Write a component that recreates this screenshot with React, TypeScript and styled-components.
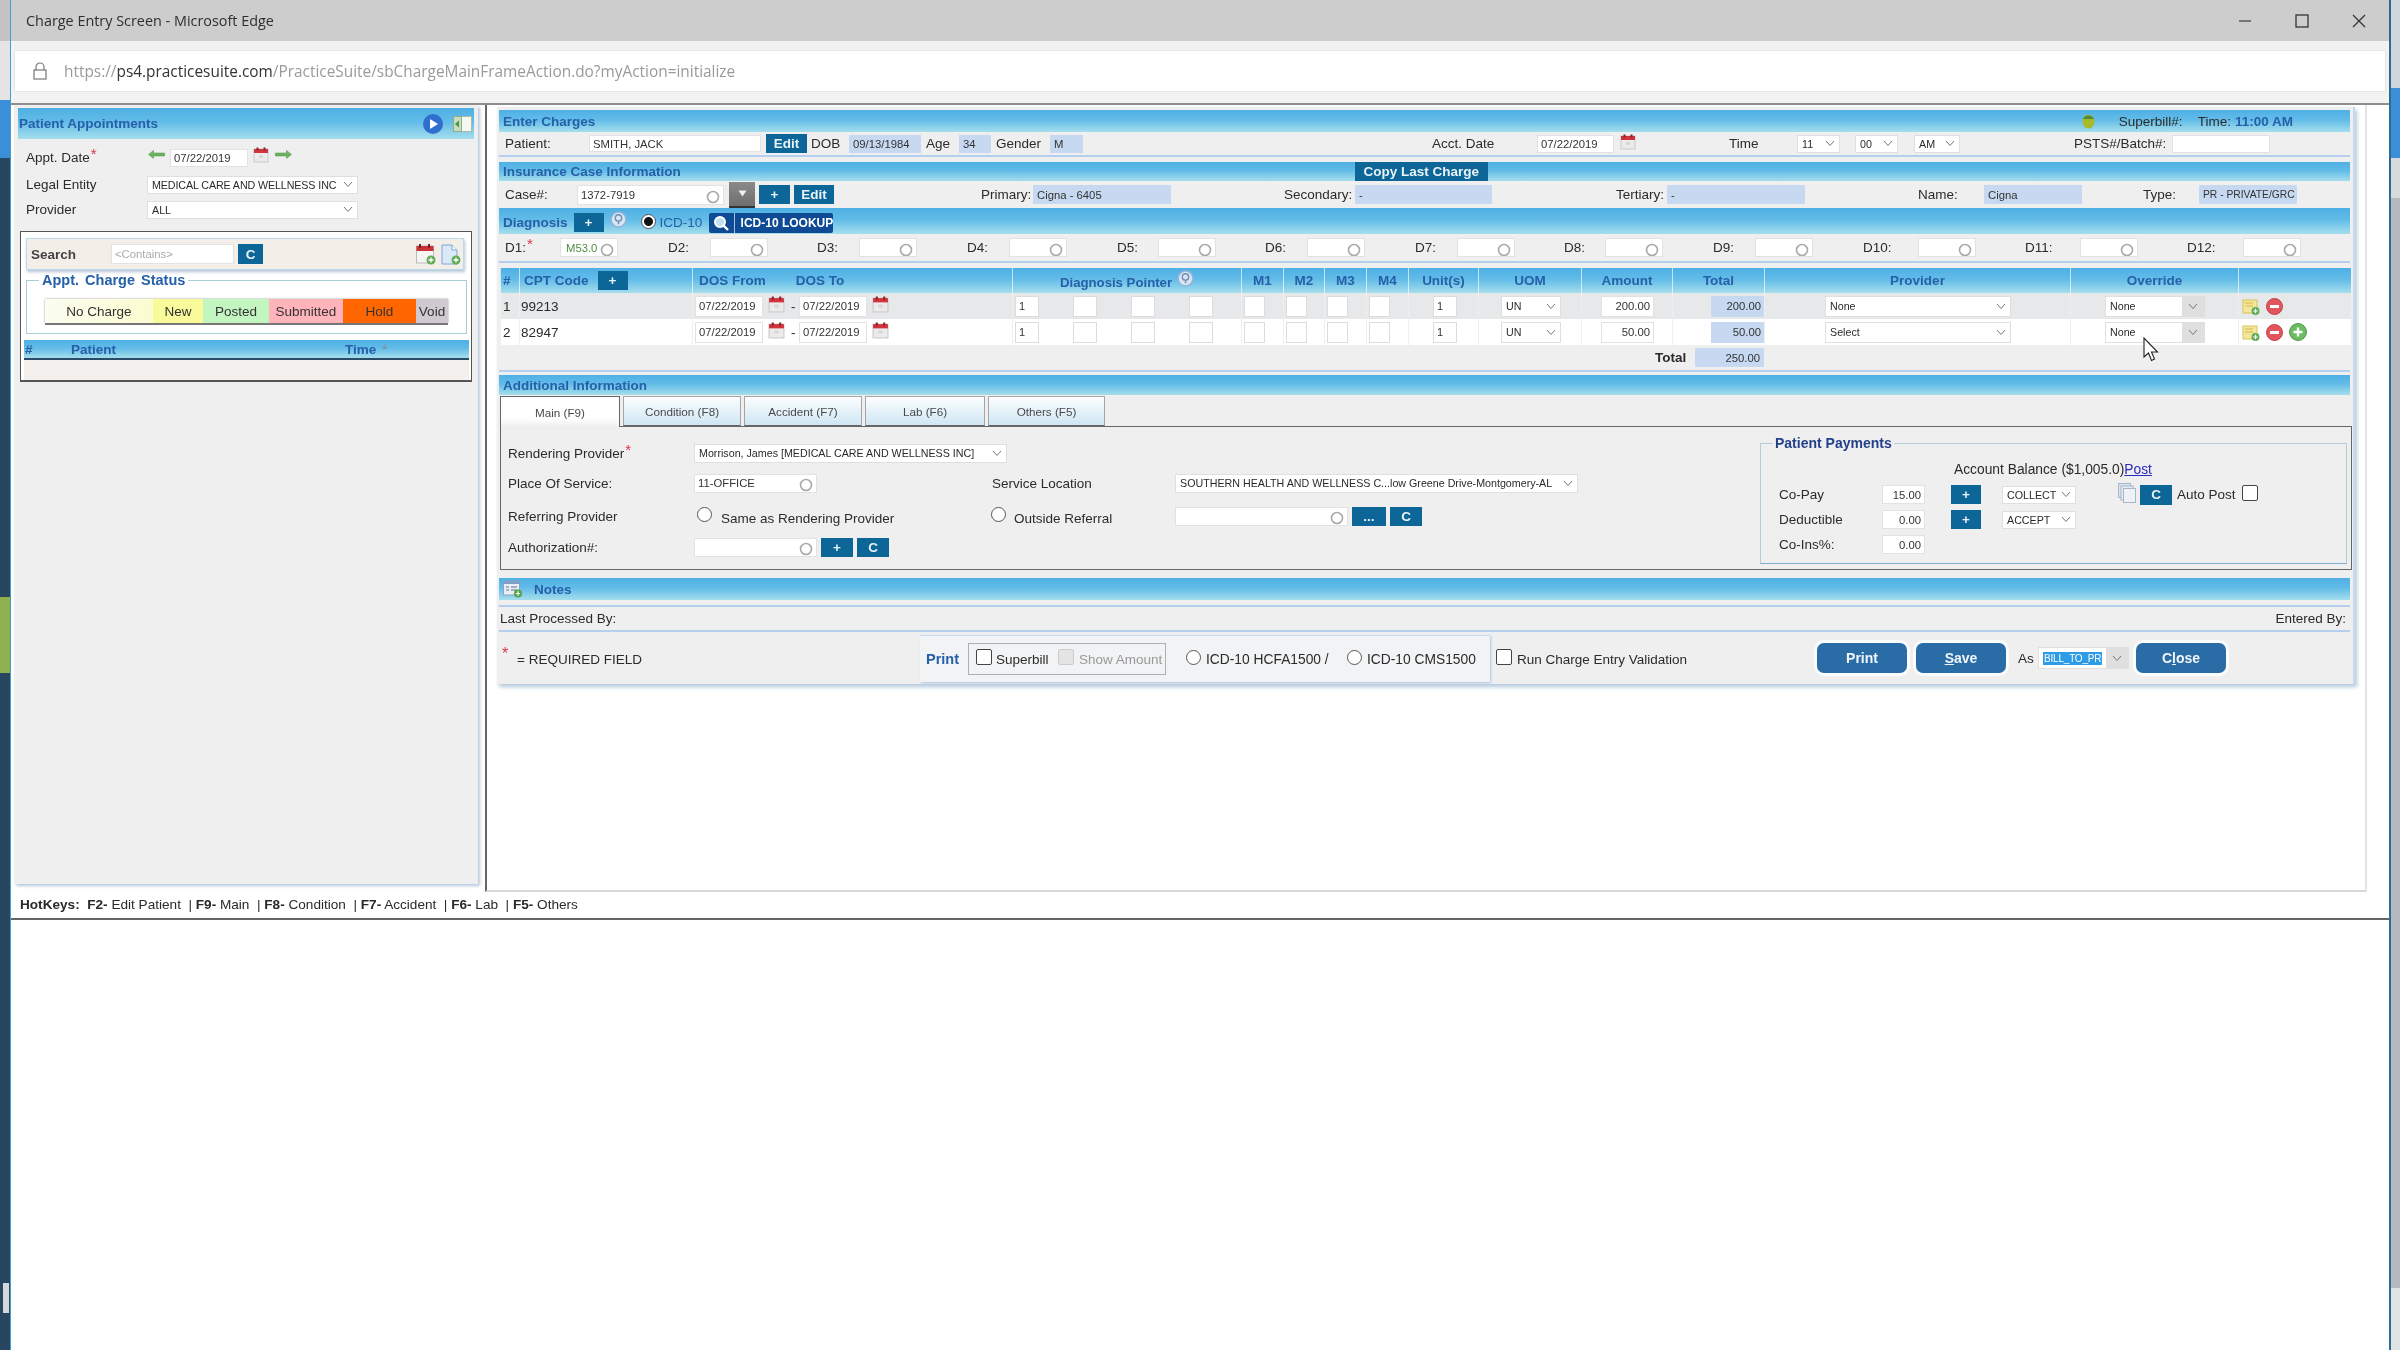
import React from "react";
import styled, { createGlobalStyle } from "styled-components";

const Global = createGlobalStyle`
  html, body { margin: 0; padding: 0; background: #fff; }
  body { font-family: "Liberation Sans", Arial, sans-serif; font-size: 13.5px; color: #2a2a2a; }
  * { box-sizing: border-box; }
`;

const BLUE = "#2560a8";
const headGrad = "linear-gradient(180deg, #4fb0e4 0%, #62bce8 45%, #a5deec 100%)";

const Page = styled.div`
  width: 2400px; height: 1350px; display: flex; overflow: hidden; background: #fff; filter: blur(0.4px);
`;
const LeftStrip = styled.div`
  width: 11px; display: flex; flex-direction: column; background: #274761; border-right: 1px solid #3fa3c9;
`;
const StripPart = styled.div<{ $h: number; $c: string }>`
  height: ${p => p.$h}px; background: ${p => p.$c}; flex: none;
`;
const StripHandle = styled.div`
  width: 6px; height: 30px; margin-left: 3px; background: #d5d8da; flex: none;
`;
const RightStrip = styled.div`
  width: 11px; display: flex; flex-direction: column; background: #b6babe; border-left: 2px solid #2f6a8f;
`;
const Win = styled.div`
  flex: 1; display: flex; flex-direction: column; min-width: 0;
`;
const TitleBar = styled.div`
  height: 41px; background: #cdcdcd; display: flex; align-items: center; padding-left: 15px;
  font-family: "Open Sans", sans-serif; font-size: 14.4px; color: #2f2f2f;
`;
const WinBtns = styled.div`
  margin-left: auto; display: flex; align-items: center; gap: 43px; padding-right: 23px;
`;
const AddressArea = styled.div`
  height: 62px; background: #f2f2f2; padding: 9px 3px 10px 3px;
`;
const AddressBox = styled.div`
  height: 42px; background: #fff; border: 1px solid #e6e6e6; display: flex; align-items: center; padding-left: 18px;
  font-family: "Open Sans", sans-serif; font-size: 15.4px; color: #9a9a9a; white-space: nowrap;
`;
const Host = styled.span` color: #333; `;
const Url = styled.span` margin-left: 17px; `;
const Body = styled.div`
  height: 787px; display: flex; flex: none; border-top: 2px solid #8d8d8d;
`;
const LeftPanel = styled.div`
  width: 464px; height: 779px; margin-left: 3px; background: #efeff0; padding: 3px 4px 0; flex: none;
  box-shadow: 2px 2px 3px #b4c8dc;
`;
const RightPanel = styled.div`
  margin-left: 7px; width: 1882px; flex: none; height: 787px; background: #fff;
  border-left: 2px solid #666; border-right: 2px solid #e4e4e4; border-bottom: 2px solid #d8d8d8;
  padding: 2px 0 0 10px;
`;
const Bar = styled.div<{ $h: number; $mt?: number; $pt?: number; $pl?: number }>`
  height: ${p => p.$h}px; margin-top: ${p => p.$mt ?? 0}px; padding-top: ${p => p.$pt ?? 0}px; background: ${headGrad}; display: flex; align-items: center;
  padding-left: ${p => p.$pl ?? 4}px; color: ${BLUE}; font-weight: 700; font-size: 13.5px; white-space: nowrap; flex: none;
`;
const LRow = styled.div<{ $h: number; $pt?: number }>`
  height: ${p => p.$h}px; padding-top: ${p => p.$pt ?? 0}px; display: flex; align-items: center; padding-left: 8px;
`;
const Label = styled.span<{ $w?: number; $ml?: number; $mt?: number; $b?: boolean; $c?: string; $fs?: number }>`
  display: inline-block; flex: none; white-space: nowrap;
  ${p => (p.$w ? `width:${p.$w}px;` : "")}
  margin-left: ${p => p.$ml ?? 0}px;
  margin-top: ${p => p.$mt ?? 0}px;
  font-weight: ${p => (p.$b ? 700 : 400)};
  color: ${p => p.$c ?? "#2b2b2b"};
  font-size: ${p => p.$fs ?? 13.5}px;
`;
const Star = styled.sup`
  color: #e0324b; font-size: 15px; line-height: 0; vertical-align: 3px; margin-left: 1px;
`;
const Inp = styled.div<{ $w: number; $ml?: number; $h?: number; $right?: boolean; $fs?: number; $c?: string }>`
  width: ${p => p.$w}px; height: ${p => p.$h ?? 18}px; margin-left: ${p => p.$ml ?? 0}px; flex: none;
  background: #fff; border: 1px solid #e2e2e2; display: flex; align-items: center;
  justify-content: ${p => (p.$right ? "flex-end" : "flex-start")};
  padding: 0 3px; font-size: ${p => p.$fs ?? 11.3}px; color: ${p => p.$c ?? "#333"}; white-space: nowrap; overflow: hidden;
`;
const InpText = styled.span` flex: 1; overflow: hidden; `;
const Ro = styled(Inp)`
  background: #c6d9f1; border-color: #c6d9f1;
`;
const Sel = styled.div<{ $w: number; $ml?: number; $h?: number }>`
  width: ${p => p.$w}px; height: ${p => p.$h ?? 18}px; margin-left: ${p => p.$ml ?? 0}px; flex: none;
  background: #fff; border: 1px solid #dfdfdf; display: flex; align-items: center;
  padding-left: 4px; font-size: 10.7px; color: #2a2a2a; white-space: nowrap; overflow: hidden;
`;
const SelText = styled.span` flex: 1; overflow: hidden; `;
const Tight = styled.span` letter-spacing: -0.1px; `;
const SelArrow = styled.span<{ $shade?: boolean; $w?: number }>`
  width: ${p => p.$w ?? 18}px; height: 100%; display: flex; align-items: center; justify-content: center; flex: none;
  background: ${p => (p.$shade ? "#dfdfdf" : "transparent")};
`;
const Btn = styled.div<{ $w: number; $ml?: number; $h?: number; $gray?: boolean }>`
  width: ${p => p.$w}px; height: ${p => p.$h ?? 19}px; margin-left: ${p => p.$ml ?? 0}px; flex: none;
  background: ${p => (p.$gray ? "linear-gradient(180deg,#8a8a8a,#6e6e6e)" : "#0c6697")};
  ${p => (p.$gray ? "border-bottom: 2px solid #333;" : "")}
  color: #e9f3f8; font-weight: 700; font-size: 13.5px;
  display: flex; align-items: center; justify-content: center;
`;
const Icon = styled.span<{ $ml?: number; $mt?: number }>`
  display: inline-flex; flex: none; margin-left: ${p => p.$ml ?? 0}px; margin-top: ${p => p.$mt ?? 0}px;
`;

const Box = styled.div`
  margin: 9px 0 0 2px; width: 452px; height: 151px; background: #fff; border: 1px solid #555; border-bottom-width: 2px;
  padding: 6px 0 0 5px;
`;
const SearchBar = styled.div`
  width: 438px; height: 32px; background: #f3eee8; border: 1px solid #b9d9ec; box-shadow: 1px 2px 3px #b5c5d5;
  display: flex; align-items: center; padding-left: 4px; flex: none;
`;
const StatusSet = styled.fieldset`
  width: 441px; height: 62px; margin: 2px 0 0 0; padding: 0 0 0 18px; border: 1px solid #a9cdd6;
`;
const StatusLegend = styled.legend`
  margin-left: -6px; padding: 0 3px; font-weight: 700; font-size: 14.5px; color: ${BLUE}; word-spacing: 2px; line-height: 16px;
`;
const StatusBar = styled.div`
  width: 403px; height: 24px; margin-top: 11px; display: flex; box-shadow: 0 2px 0 #777, 0 0 2px #999;
`;
const StatusCell = styled.div<{ $w: number; $bg: string; $c?: string }>`
  width: ${p => p.$w}px; background: ${p => p.$bg}; display: flex; align-items: center; justify-content: center;
  font-size: 13.5px; color: ${p => p.$c ?? "#333"}; flex: none;
`;
const ApptHead = styled.div`
  width: 445px; height: 20px; margin: 6px 0 0 -2px; background: ${headGrad}; border-bottom: 2px solid #2a4a6a;
  display: flex; align-items: center; color: ${BLUE}; font-weight: 700; font-size: 13.5px; padding-left: 1px;
`;
const ApptRow = styled.div`
  width: 445px; height: 20px; margin-left: -2px; background: #f3f0ee;
`;

const Card = styled.div`
  width: 1858px; height: 577px; background: #efeff0; padding: 3px 3px 0 2px;
  box-shadow: 2px 3px 4px #b4c8dc; border-right: 2px solid #c6d9ee;
`;
const Row = styled.div<{ $h: number; $pl?: number }>`
  height: ${p => p.$h}px; display: flex; align-items: center; padding-left: ${p => p.$pl ?? 6}px; flex: none;
`;
const Rule = styled.div<{ $mt?: number }>`
  height: 2px; background: #b5cfee; margin-top: ${p => p.$mt ?? 0}px; flex: none;
`;
const RightGroup = styled.div<{ $pr: number }>`
  margin-left: auto; padding-right: ${p => p.$pr}px; display: flex; align-items: center; font-weight: 400;
`;
const Grid = styled.div`
  display: grid; margin: 5px 0 0 1px;
  grid-template-columns: 19px 173px 320px 229px 42px 41px 42px 42px 70px 103px 91px 92px 306px 168px 113px;
`;
const HCell = styled.div<{ $center?: boolean; $pl?: number; $pt?: number }>`
  height: 25px; background: ${headGrad}; color: ${BLUE}; font-weight: 700; font-size: 13.5px;
  display: flex; align-items: center; white-space: nowrap;
  justify-content: ${p => (p.$center ? "center" : "flex-start")};
  padding-left: ${p => p.$pl ?? 0}px;
  border-left: 1px solid rgba(255,255,255,.65);
`;
const DCell = styled.div<{ $alt?: boolean; $pl?: number; $gap?: number }>`
  height: 26px; background: ${p => (p.$alt ? "#fff" : "#e6e8ea")}; display: flex; align-items: center;
  padding-left: ${p => p.$pl ?? 0}px; white-space: nowrap; font-size: 13.5px; gap: ${p => p.$gap ?? 0}px;
  border-left: 1px solid ${p => (p.$alt ? "#eee" : "#eceef0")};
`;
const SmallBox = styled.div<{ $w: number }>`
  width: ${p => p.$w}px; height: 21px; background: #fff; border: 1px solid #dcdcdc; flex: none;
  display: flex; align-items: center; padding-left: 3px; font-size: 11px; color: #333;
`;
const Tabs = styled.div`
  display: flex; height: 30px; padding-left: 1px; gap: 3px; margin-top: 1px; flex: none;
`;
const Tab = styled.div<{ $w: number; $on?: boolean }>`
  width: ${p => p.$w}px; height: ${p => (p.$on ? 31 : 30)}px; z-index: 1; flex: none; padding-top: 1px;
  background: ${p => (p.$on ? "#fff linear-gradient(180deg,#fff 70%,#efeff0)" : "linear-gradient(180deg,#fbfdfe,#cfe7f3)")};
  border: 1px solid ${p => (p.$on ? "#666" : "#a5a5a5")}; border-bottom: ${p => (p.$on ? "none" : "1px solid #666")};
  display: flex; align-items: center; justify-content: center; font-size: 11.7px; color: #4a4a4a;
`;
const TabPanel = styled.div`
  margin-left: 1px; width: 1852px; height: 144px; border: 1px solid #666; display: flex; flex: none;
`;
const FormCol = styled.div`
  padding: 13px 0 0 7px; display: flex; flex-direction: column; width: 1240px; flex: none;
`;
const FormRow = styled.div<{ $h: number }>`
  height: ${p => p.$h}px; display: flex; align-items: center; flex: none;
`;
const Pay = styled.fieldset`
  margin: 8px 0 0 19px; padding: 0; width: 587px; height: 129px; border: 1px solid #b0ced8; border-bottom-color: #7fb0d0; flex: none;
`;
const PayLegend = styled.legend`
  margin-left: 12px; padding: 0 2px; font-weight: 700; font-size: 14px; color: #24408a; line-height: 16px;
`;
const PayRow = styled.div<{ $pl?: number; $mt?: number; $fs?: number }>`
  height: 25px; display: flex; align-items: center; padding-left: ${p => p.$pl ?? 18}px; margin-top: ${p => p.$mt ?? 0}px;
  font-size: ${p => p.$fs ?? 13.5}px;
`;
const Link = styled.a`
  color: #2a2ac0; text-decoration: underline; font-size: 13.8px;
`;
const Foot = styled.div`
  height: 52px; display: flex; align-items: center; padding-left: 3px; flex: none;
`;
const PrintBox = styled.div`
  width: 570px; height: 47px; flex: none; background: #f2f3f4; display: flex; align-items: center; padding-left: 6px;
  box-shadow: 1px 1px 2px #a9c4e4; border-top: 1px solid #c8daee;
`;
const PrintInner = styled.div`
  width: 198px; height: 32px; border: 1px solid #b0b0b0; display: flex; align-items: center; padding-left: 7px; flex: none;
`;
const Check = styled.div<{ $ml?: number; $off?: boolean }>`
  width: 16px; height: 16px; flex: none; margin-left: ${p => p.$ml ?? 0}px; margin-top: -3px;
  border: 1px solid ${p => (p.$off ? "#ccc" : "#444")}; background: ${p => (p.$off ? "#e4e4e4" : "#fff")}; border-radius: 2px;
`;
const Radio = styled.div<{ $ml?: number; $on?: boolean }>`
  width: 15px; height: 15px; flex: none; margin-left: ${p => p.$ml ?? 0}px; margin-top: -3px; border-radius: 50%;
  border: 1px solid #555; background: ${p => (p.$on ? "radial-gradient(circle,#111 0 4px,#fff 5px)" : "#fff")};
`;
const ActBtn = styled.div<{ $ml?: number }>`
  width: 90px; height: 30px; margin-left: ${p => p.$ml ?? 0}px; flex: none; background: #2a6ca6; border-radius: 7px;
  color: #f1f6fa; font-weight: 700; font-size: 14px; display: flex; align-items: center; justify-content: center;
  box-shadow: 0 0 0 3px #fbfcfd;
`;
const Under = styled.span` text-decoration: underline; `;
const Picked = styled.span`
  background: #2e9be6; color: #fff; padding: 1px 1px; font-size: 10px; letter-spacing: -0.2px; display: inline-block;
`;
const Hot = styled.div`
  height: 30px; display: flex; align-items: center; padding-left: 9px; flex: none; border-bottom: 2px solid #666;
  font-size: 13.6px; color: #2a2a2a; white-space: pre;
`;
const Cursor = styled.svg`
  position: absolute; left: 2143px; top: 337px; z-index: 5;
`;
const Stage = styled.div` position: relative; `;
const LookupBtn = styled.div`
  width: 124px; height: 20px; margin-left: 7px; flex: none; background: #0e4b94; border-radius: 2px; display: flex; align-items: center;
  color: #fff; font-size: 12px; font-weight: 700;
`;
const LookupGlass = styled.span`
  width: 26px; height: 100%; display: flex; align-items: center; justify-content: center; border-right: 1px solid #9fc0e0;
`;
const LookupText = styled.span` margin-left: 6px; `;
const DiagField = styled(Inp)`
  padding-left: 5px;
`;
const DiagCell = styled.div<{ $gap: number }>`
  display: flex; align-items: center; flex: none; margin-left: ${p => p.$gap}px;
`;
const TimeVal = styled.span` color: ${BLUE}; font-weight: 700; margin-left: 4px; `;
const Legend = styled.span` color: #e0324b; font-size: 16px; width: 15px; margin-top: -8px; flex: none; `;
const RingMark = styled.svg` margin-top: 4px; flex: none; `;

const Chev = ({ c = "#777" }: { c?: string }) => (
  <svg width="10" height="7" viewBox="0 0 10 7"><polyline points="1,1 5,5.5 9,1" fill="none" stroke={c} strokeWidth="1" /></svg>
);
const Ring = () => (
  <RingMark width="14" height="14" viewBox="0 0 14 14"><circle cx="7" cy="7" r="5.5" fill="#fff" stroke="#a8a8a8" strokeWidth="1.6" /></RingMark>
);
const Cal = ({ s = 16 }: { s?: number }) => (
  <svg width={s} height={s} viewBox="0 0 16 16">
    <rect x="1" y="2" width="14" height="13" fill="#eceaea" stroke="#c9c9c9" />
    <rect x="1" y="2" width="14" height="4" fill="#d1343c" />
    <rect x="3.5" y="0.5" width="2" height="3" fill="#8a2328" />
    <rect x="10.5" y="0.5" width="2" height="3" fill="#8a2328" />
    <rect x="6" y="8" width="4" height="3" fill="#d8d8d8" />
  </svg>
);
const ArrowL = () => (
  <svg width="17" height="9" viewBox="0 0 17 9"><path d="M0.5 4.5 L5.5 0.5 V3 H16.5 V6 H5.5 V8.5 Z" fill="#6db45f" stroke="#4d8f45" strokeWidth=".5" /></svg>
);
const ArrowR = () => (
  <svg width="17" height="9" viewBox="0 0 17 9"><path d="M16.5 4.5 L11.5 0.5 V3 H0.5 V6 H11.5 V8.5 Z" fill="#6db45f" stroke="#4d8f45" strokeWidth=".5" /></svg>
);
const PlayIcon = () => (
  <svg width="20" height="20" viewBox="0 0 20 20"><circle cx="10" cy="10" r="10" fill="#2f6fce" /><path d="M7 5 L15 10 L7 15 Z" fill="#fff" /></svg>
);
const DoorIcon = () => (
  <svg width="19" height="16" viewBox="0 0 19 16"><rect x="0.5" y="0.5" width="18" height="15" fill="#f4f7f2" stroke="#a9c0a0" /><rect x="0.5" y="0.5" width="8" height="15" fill="#c9dcc0" stroke="#8fae85" /><path d="M2 8 L6 4.5 V11.5 Z" fill="#3d9a45" /></svg>
);
const CalAdd = () => (
  <svg width="20" height="21" viewBox="0 0 20 21"><rect x="0.5" y="2" width="17" height="17" fill="#f4f4f4" stroke="#bbb" /><rect x="0.5" y="2" width="17" height="5" fill="#cc3038" /><rect x="3" y="0" width="2" height="4" fill="#7a2025" /><rect x="12" y="0" width="2" height="4" fill="#7a2025" /><circle cx="15" cy="16" r="4.5" fill="#62ac58" /><path d="M15 13.5v5M12.5 16h5" stroke="#fff" strokeWidth="1.3" /></svg>
);
const DocAdd = () => (
  <svg width="20" height="21" viewBox="0 0 20 21"><path d="M1 1 H11 L16 6 V20 H1 Z" fill="#dbe8f6" stroke="#7ba6d8" /><path d="M11 1 V6 H16" fill="#fff" stroke="#7ba6d8" /><circle cx="15" cy="16" r="4.5" fill="#62ac58" /><path d="M15 13.5v5M12.5 16h5" stroke="#fff" strokeWidth="1.3" /></svg>
);
const Help = () => (
  <svg width="17" height="17" viewBox="0 0 16 16"><circle cx="8" cy="8" r="7" fill="#dbe6f3" stroke="#93b4d6" strokeWidth="1.5" /><circle cx="8" cy="6.5" r="3" fill="none" stroke="#6d90bb" strokeWidth="1.3" /><path d="M8 10v2.5" stroke="#6d90bb" strokeWidth="1.4" /></svg>
);
const Glass = () => (
  <svg width="16" height="16" viewBox="0 0 16 16"><circle cx="7" cy="7" r="5" fill="#bfe0f5" stroke="#fff" strokeWidth="2" /><path d="M10.5 10.5 L15 15" stroke="#fff" strokeWidth="2.4" /></svg>
);
const NoteAdd = () => (
  <svg width="18" height="18" viewBox="0 0 18 18"><rect x="1" y="3" width="14" height="13" fill="#f4e79a" stroke="#d6c35a" /><path d="M3 6h8M3 9h8" stroke="#d9b44a" /><circle cx="13.5" cy="14" r="4" fill="#62ac58" /><path d="M13.5 11.8v4.4M11.3 14h4.4" stroke="#fff" strokeWidth="1.2" /></svg>
);
const Minus = () => (
  <svg width="17" height="17" viewBox="0 0 17 17"><circle cx="8.5" cy="8.5" r="8" fill="#e0565c" stroke="#c74046" /><rect x="4" y="7" width="9" height="3" fill="#fff" /></svg>
);
const PlusG = () => (
  <svg width="18" height="18" viewBox="0 0 18 18"><circle cx="9" cy="9" r="8.5" fill="#6dbb62" stroke="#4f9d46" /><path d="M9 4.5v9M4.5 9h9" stroke="#fff" strokeWidth="2.4" /></svg>
);
const NotesIcon = () => (
  <svg width="20" height="18" viewBox="0 0 20 18"><rect x="0.5" y="1" width="16" height="14" fill="#e8eef6" stroke="#8fa3bb" /><rect x="0.5" y="1" width="16" height="3" fill="#7f9fc4" /><path d="M3 7h3M8 7h6M3 10h3M8 10h6" stroke="#5d7289" /><circle cx="15" cy="13.5" r="4" fill="#52a34a" /><path d="M15 11.3v4.4M12.8 13.5h4.4" stroke="#fff" strokeWidth="1.2" /></svg>
);
const Copies = () => (
  <svg width="18" height="20" viewBox="0 0 18 20"><rect x="0.5" y="0.5" width="12" height="14" fill="#dbe3ee" stroke="#a8b8cc" /><rect x="3" y="3" width="12" height="14" fill="#e5ebf3" stroke="#a8b8cc" /><rect x="5.5" y="5.5" width="12" height="14" fill="#eef2f7" stroke="#a8b8cc" /></svg>
);
const Lock = () => (
  <svg width="14" height="18" viewBox="0 0 14 18"><path d="M3 8 V5 a4 4 0 0 1 8 0 V8" fill="none" stroke="#777" strokeWidth="1.2" /><rect x="1" y="8" width="12" height="9" fill="none" stroke="#777" strokeWidth="1.2" /></svg>
);
const Led = () => (
  <svg width="13" height="15" viewBox="0 0 13 15"><ellipse cx="6.5" cy="7.5" rx="6" ry="7" fill="#a8b92a" /><path d="M1 5 a6 6 0 0 1 11 0 Z" fill="#4f8a3a" /></svg>
);
const DownTri = () => (
  <svg width="9" height="7" viewBox="0 0 9 7"><path d="M0.5 0.5 H8.5 L4.5 6.5 Z" fill="#f0f0f0" /></svg>
);

const Select = ({ w, ml, h, text, shade, aw }: { w: number; ml?: number; h?: number; text: React.ReactNode; shade?: boolean; aw?: number }) => (
  <Sel $w={w} $ml={ml} $h={h}>
    <SelText>{text}</SelText>
    <SelArrow $shade={shade} $w={aw}><Chev /></SelArrow>
  </Sel>
);
const Lookup = ({ w, ml, h, text }: { w: number; ml?: number; h?: number; text?: string }) => (
  <Inp $w={w} $ml={ml} $h={h}>
    <InpText>{text}</InpText>
    <Ring />
  </Inp>
);

const diag = [
  { l: "D1:", lw: 55, g: 0, star: true, v: "M53.0" }, { l: "D2:", lw: 42, g: 50 }, { l: "D3:", lw: 42, g: 49 }, { l: "D4:", lw: 42, g: 50 },
  { l: "D5:", lw: 41, g: 50 }, { l: "D6:", lw: 42, g: 49 }, { l: "D7:", lw: 42, g: 50 }, { l: "D8:", lw: 41, g: 49 },
  { l: "D9:", lw: 42, g: 50 }, { l: "D10:", lw: 55, g: 50 }, { l: "D11:", lw: 55, g: 49 }, { l: "D12:", lw: 56, g: 49 },
];
const charges = [
  { n: "1", cpt: "99213", amt: "200.00", prov: "None", add: false, alt: false },
  { n: "2", cpt: "82947", amt: "50.00", prov: "Select", add: true, alt: true },
];

const ChargeRow = ({ c }: { c: (typeof charges)[number] }) => (
  <>
    <DCell $alt={c.alt} $pl={2}>{c.n}</DCell>
    <DCell $alt={c.alt} $pl={1}>{c.cpt}</DCell>
    <DCell $alt={c.alt} $pl={2}>
      <Inp $w={68} $h={21}>07/22/2019</Inp><Icon $ml={5} $mt={-3}><Cal s={17} /></Icon><Label $ml={6} $w={8}>-</Label>
      <Inp $w={68} $h={21}>07/22/2019</Inp><Icon $ml={5} $mt={-3}><Cal s={17} /></Icon>
    </DCell>
    <DCell $alt={c.alt} $pl={2} $gap={34}>
      <SmallBox $w={24}>1</SmallBox><SmallBox $w={24} /><SmallBox $w={24} /><SmallBox $w={24} />
    </DCell>
    {[0, 1, 2, 3].map(i => <DCell key={i} $alt={c.alt} $pl={2}><SmallBox $w={21} /></DCell>)}
    <DCell $alt={c.alt} $pl={24}><SmallBox $w={24}>1</SmallBox></DCell>
    <DCell $alt={c.alt} $pl={22}><Select w={60} h={21} text="UN" /></DCell>
    <DCell $alt={c.alt} $pl={19}><Inp $w={53} $h={21} $right>{c.amt}</Inp></DCell>
    <DCell $alt={c.alt} $pl={38}><Ro $w={54} $h={21} $right>{c.amt}</Ro></DCell>
    <DCell $alt={c.alt} $pl={60}><Select w={186} h={21} text={c.prov} /></DCell>
    <DCell $alt={c.alt} $pl={34}><Select w={100} h={21} text="None" shade aw={22} /></DCell>
    <DCell $alt={c.alt} $pl={3}>
      <NoteAdd /><Icon $ml={6}><Minus /></Icon>{c.add && <Icon $ml={6}><PlusG /></Icon>}
    </DCell>
  </>
);

export default function App() {
  return (
    <Stage>
      <Global />
      <Page>
        <LeftStrip>
          <StripPart $h={41} $c="#c4c4c4" />
          <StripPart $h={59} $c="#e4e4e4" />
          <StripPart $h={58} $c="#3a8fd8" />
          <StripPart $h={439} $c="#274761" />
          <StripPart $h={76} $c="#8eb04f" />
          <StripPart $h={610} $c="#274761" />
          <StripHandle />
        </LeftStrip>
        <Win>
          <TitleBar>
            Charge Entry Screen - Microsoft Edge
            <WinBtns>
              <svg width="14" height="14" viewBox="0 0 14 14"><path d="M1 7h12" stroke="#444" strokeWidth="1.3" /></svg>
              <svg width="14" height="14" viewBox="0 0 14 14"><rect x="1" y="1" width="12" height="12" fill="none" stroke="#333" strokeWidth="1.3" /></svg>
              <svg width="14" height="14" viewBox="0 0 14 14"><path d="M1 1l12 12M13 1L1 13" stroke="#333" strokeWidth="1.3" /></svg>
            </WinBtns>
          </TitleBar>
          <AddressArea>
            <AddressBox>
              <Lock />
              <Url>https://<Host>ps4.practicesuite.com</Host>/PracticeSuite/sbChargeMainFrameAction.do?myAction=initialize</Url>
            </AddressBox>
          </AddressArea>
          <Body>
            <LeftPanel>
              <Bar $h={31} $pl={1}>
                Patient Appointments
                <RightGroup $pr={2}>
                  <PlayIcon /><Icon $ml={10}><DoorIcon /></Icon>
                </RightGroup>
              </Bar>
              <LRow $h={33} $pt={4}>
                <Label $w={122}>Appt. Date<Star>*</Star></Label>
                <Icon $mt={-6}><ArrowL /></Icon>
                <Inp $w={78} $ml={5}>07/22/2019</Inp>
                <Icon $ml={5} $mt={-6}><Cal /></Icon>
                <Icon $ml={6} $mt={-6}><ArrowR /></Icon>
              </LRow>
              <LRow $h={25}>
                <Label $w={121}>Legal Entity</Label>
                <Select w={211} text={<Tight>MEDICAL CARE AND WELLNESS INC</Tight>} />
              </LRow>
              <LRow $h={25}>
                <Label $w={121}>Provider</Label>
                <Select w={211} text="ALL" />
              </LRow>
              <Box>
                <SearchBar>
                  <Label $w={80} $b $c="#444">Search</Label>
                  <Inp $w={123} $h={20} $c="#aaa">&lt;Contains&gt;</Inp>
                  <Btn $w={25} $ml={4} $h={20}>C</Btn>
                  <Icon $ml={153}><CalAdd /></Icon>
                  <Icon $ml={5}><DocAdd /></Icon>
                </SearchBar>
                <StatusSet>
                  <StatusLegend>Appt. Charge Status</StatusLegend>
                  <StatusBar>
                    <StatusCell $w={108} $bg="linear-gradient(90deg,#fbfdf0,#fbfccf)">No Charge</StatusCell>
                    <StatusCell $w={50} $bg="#f9fa9a">New</StatusCell>
                    <StatusCell $w={66} $bg="#c3f5c0">Posted</StatusCell>
                    <StatusCell $w={74} $bg="#ffb3bb">Submitted</StatusCell>
                    <StatusCell $w={73} $bg="#ff6600">Hold</StatusCell>
                    <StatusCell $w={32} $bg="#cfc9d0">Void</StatusCell>
                  </StatusBar>
                </StatusSet>
                <ApptHead>
                  <Label $w={46} $b $c={BLUE}>#</Label>
                  <Label $w={274} $b $c={BLUE}>Patient</Label>
                  <Label $b $c={BLUE}>Time</Label>
                  <Label $ml={4} $mt={-6} $fs={9} $c="#7a9ab0">▲</Label>
                </ApptHead>
                <ApptRow />
              </Box>
            </LeftPanel>
            <RightPanel>
              <Card>
                <Bar $h={22}>
                  Enter Charges
                  <RightGroup $pr={57}>
                    <Led />
                    <Label $ml={24} $w={79}>Superbill#:</Label>
                    <Label>Time:</Label>
                    <TimeVal>11:00 AM</TimeVal>
                  </RightGroup>
                </Bar>
                <Row $h={23}>
                  <Label $w={84}>Patient:</Label>
                  <Inp $w={172} $h={17}>SMITH, JACK</Inp>
                  <Btn $w={41} $ml={5}>Edit</Btn>
                  <Label $w={38} $ml={4}>DOB</Label>
                  <Ro $w={72}>09/13/1984</Ro>
                  <Label $w={33} $ml={5}>Age</Label>
                  <Ro $w={32}>34</Ro>
                  <Label $w={54} $ml={5}>Gender</Label>
                  <Ro $w={33}>M</Ro>
                  <Label $w={105} $ml={349}>Acct. Date</Label>
                  <Inp $w={77}>07/22/2019</Inp>
                  <Icon $ml={6} $mt={-3}><Cal /></Icon>
                  <Label $w={68} $ml={93}>Time</Label>
                  <Select w={43} text="11" />
                  <Select w={43} ml={15} text="00" />
                  <Select w={46} ml={16} text="AM" />
                  <Label $w={98} $ml={114}>PSTS#/Batch#:</Label>
                  <Inp $w={98} />
                </Row>
                <Rule />
                <Bar $h={19} $mt={5}>
                  Insurance Case Information
                  <Btn $w={133} $ml={674} $h={19}>Copy Last Charge</Btn>
                </Bar>
                <Row $h={27}>
                  <Label $w={72}>Case#:</Label>
                  <Lookup w={147} text="1372-7919" h={20} />
                  <Btn $w={26} $ml={5} $h={26} $gray><DownTri /></Btn>
                  <Btn $w={31} $ml={4}>+</Btn>
                  <Btn $w={40} $ml={4}>Edit</Btn>
                  <Label $w={52} $ml={147}>Primary:</Label>
                  <Ro $w={138} $h={19}>Cigna - 6405</Ro>
                  <Label $w={71} $ml={113}>Secondary:</Label>
                  <Ro $w={137} $h={19}>-</Ro>
                  <Label $w={51} $ml={124}>Tertiary:</Label>
                  <Ro $w={138} $h={19}>-</Ro>
                  <Label $w={66} $ml={113}>Name:</Label>
                  <Ro $w={98} $h={19}>Cigna</Ro>
                  <Label $w={56} $ml={61}>Type:</Label>
                  <Ro $w={98} $h={19} $fs={10.3}>PR - PRIVATE/GRC</Ro>
                </Row>
                <Bar $h={26} $pt={3}>
                  Diagnosis
                  <Btn $w={30} $ml={6}>+</Btn>
                  <Icon $ml={6} $mt={-6}><Help /></Icon>
                  <Radio $ml={14} $on />
                  <Label $ml={4} $c={BLUE}>ICD-10</Label>
                  <LookupBtn>
                    <LookupGlass><Glass /></LookupGlass>
                    <LookupText>ICD-10 LOOKUP</LookupText>
                  </LookupBtn>
                </Bar>
                <Row $h={27}>
                  {diag.map(d => (
                    <DiagCell key={d.l} $gap={d.g}>
                      <Label $w={d.lw}>{d.l}{d.star && <Star>*</Star>}</Label>
                      <DiagField $w={58} $c="#4f8f3f" $h={19}><InpText>{d.v}</InpText><Ring /></DiagField>
                    </DiagCell>
                  ))}
                </Row>
                <Rule />
                <Grid>
                  <HCell $pl={2}>#</HCell>
                  <HCell $pl={4}>CPT Code<Btn $w={30} $ml={9}>+</Btn></HCell>
                  <HCell $pl={6}>DOS From<Label $b $c={BLUE} $ml={30}>DOS To</Label></HCell>
                  <HCell $center><Label $b $c={BLUE} $mt={4} $fs={13.2}>Diagnosis Pointer</Label><Icon $ml={5} $mt={-4}><Help /></Icon></HCell>
                  <HCell $center>M1</HCell><HCell $center>M2</HCell><HCell $center>M3</HCell><HCell $center>M4</HCell>
                  <HCell $center>Unit(s)</HCell><HCell $center>UOM</HCell><HCell $center>Amount</HCell><HCell $center>Total</HCell>
                  <HCell $center>Provider</HCell><HCell $center>Override</HCell><HCell />
                  {charges.map(c => <ChargeRow key={c.n} c={c} />)}
                </Grid>
                <Row $h={25} $pl={0}>
                  <Label $w={40} $ml={1156} $b>Total</Label>
                  <Ro $w={69} $h={19} $right>250.00</Ro>
                </Row>
                <Rule />
                <Bar $h={20} $mt={3}>Additional Information</Bar>
                <Tabs>
                  <Tab $w={120} $on>Main (F9)</Tab>
                  <Tab $w={118}>Condition (F8)</Tab>
                  <Tab $w={118}>Accident (F7)</Tab>
                  <Tab $w={120}>Lab (F6)</Tab>
                  <Tab $w={117}>Others (F5)</Tab>
                </Tabs>
                <TabPanel>
                  <FormCol>
                    <FormRow $h={26}>
                      <Label $w={186}>Rendering Provider<Star>*</Star></Label>
                      <Select w={313} h={19} text="Morrison, James [MEDICAL CARE AND WELLNESS INC]" />
                    </FormRow>
                    <FormRow $h={34}>
                      <Label $w={186}>Place Of Service:</Label>
                      <Lookup w={123} h={19} text="11-OFFICE" />
                      <Label $w={183} $ml={175}>Service Location</Label>
                      <Select w={403} h={19} text="SOUTHERN HEALTH AND WELLNESS C...low Greene Drive-Montgomery-AL" />
                    </FormRow>
                    <FormRow $h={32}>
                      <Label $w={186}>Referring Provider</Label>
                      <Radio $ml={3} />
                      <Label $w={270} $ml={9} $mt={4}>Same as Rendering Provider</Label>
                      <Radio />
                      <Label $w={161} $ml={8} $mt={4}>Outside Referral</Label>
                      <Lookup w={173} h={19} />
                      <Btn $w={34} $ml={4}>...</Btn>
                      <Btn $w={32} $ml={4}>C</Btn>
                    </FormRow>
                    <FormRow $h={30}>
                      <Label $w={186}>Authorization#:</Label>
                      <Lookup w={123} h={19} />
                      <Btn $w={32} $ml={4}>+</Btn>
                      <Btn $w={32} $ml={4}>C</Btn>
                    </FormRow>
                  </FormCol>
                  <Pay>
                    <PayLegend>Patient Payments</PayLegend>
                    <PayRow $pl={193} $mt={6} $fs={13.8}>Account Balance ($1,005.0)<Link>Post</Link></PayRow>
                    <PayRow>
                      <Label $w={103}>Co-Pay</Label>
                      <Inp $w={43} $h={19} $right>15.00</Inp>
                      <Btn $w={30} $ml={26}>+</Btn>
                      <Select w={74} ml={21} text="COLLECT" />
                      <Icon $ml={42} $mt={-4}><Copies /></Icon>
                      <Btn $w={32} $ml={4} $h={20}>C</Btn>
                      <Label $w={65} $ml={5}>Auto Post</Label>
                      <Check />
                    </PayRow>
                    <PayRow>
                      <Label $w={103}>Deductible</Label>
                      <Inp $w={43} $h={19} $right>0.00</Inp>
                      <Btn $w={30} $ml={26}>+</Btn>
                      <Select w={74} ml={21} text="ACCEPT" />
                    </PayRow>
                    <PayRow>
                      <Label $w={103}>Co-Ins%:</Label>
                      <Inp $w={43} $h={19} $right>0.00</Inp>
                    </PayRow>
                  </Pay>
                </TabPanel>
                <Bar $h={22} $mt={8}>
                  <NotesIcon />
                  <Label $ml={11} $b $c={BLUE}>Notes</Label>
                </Bar>
                <Rule $mt={5} />
                <Row $h={23} $pl={1}>
                  Last Processed By:
                  <RightGroup $pr={4}>Entered By:</RightGroup>
                </Row>
                <Rule />
                <Foot>
                  <Legend>*</Legend>
                  <Label $w={403} $mt={2}>= REQUIRED FIELD</Label>
                  <PrintBox>
                    <Label $w={42} $b $c={BLUE} $fs={14.5}>Print</Label>
                    <PrintInner>
                      <Check />
                      <Label $ml={4} $w={57} $mt={2}>Superbill</Label>
                      <Check $ml={5} $off />
                      <Label $ml={5} $c="#999" $mt={2}>Show Amount</Label>
                    </PrintInner>
                    <Radio $ml={20} />
                    <Label $ml={5} $w={124} $fs={13.8} $mt={2}>ICD-10 HCFA1500 /</Label>
                    <Radio $ml={17} />
                    <Label $ml={5} $fs={13.8} $mt={2}>ICD-10 CMS1500</Label>
                  </PrintBox>
                  <Check $ml={6} />
                  <Label $ml={5} $w={300} $mt={2}>Run Charge Entry Validation</Label>
                  <ActBtn>Print</ActBtn>
                  <ActBtn $ml={9}><Under>S</Under>ave</ActBtn>
                  <Label $ml={12} $w={20}>As</Label>
                  <Select w={91} h={22} shade aw={22} text={<Picked>BILL_TO_PR</Picked>} />
                  <ActBtn $ml={7}>C<Under>l</Under>ose</ActBtn>
                </Foot>
              </Card>
            </RightPanel>
          </Body>
          <Hot>
            <b>HotKeys:  F2-</b> Edit Patient  | <b>F9-</b> Main  | <b>F8-</b> Condition  | <b>F7-</b> Accident  | <b>F6-</b> Lab  | <b>F5-</b> Others
          </Hot>
        </Win>
        <RightStrip>
          <StripPart $h={88} $c="#cfd6dc" />
          <StripPart $h={70} $c="#3a8fd8" />
          <StripPart $h={40} $c="#d8dbde" />
          <StripPart $h={1090} $c="#b6babe" />
          <StripPart $h={62} $c="#dfe3e6" />
        </RightStrip>
      </Page>
      <Cursor width="17" height="25" viewBox="0 0 17 25">
        <path d="M1 1 V20 L5.5 16 L8.5 23.5 L11.5 22 L8.5 15 L14.5 15 Z" fill="#fff" stroke="#222" strokeWidth="1.1" />
      </Cursor>
    </Stage>
  );
}
